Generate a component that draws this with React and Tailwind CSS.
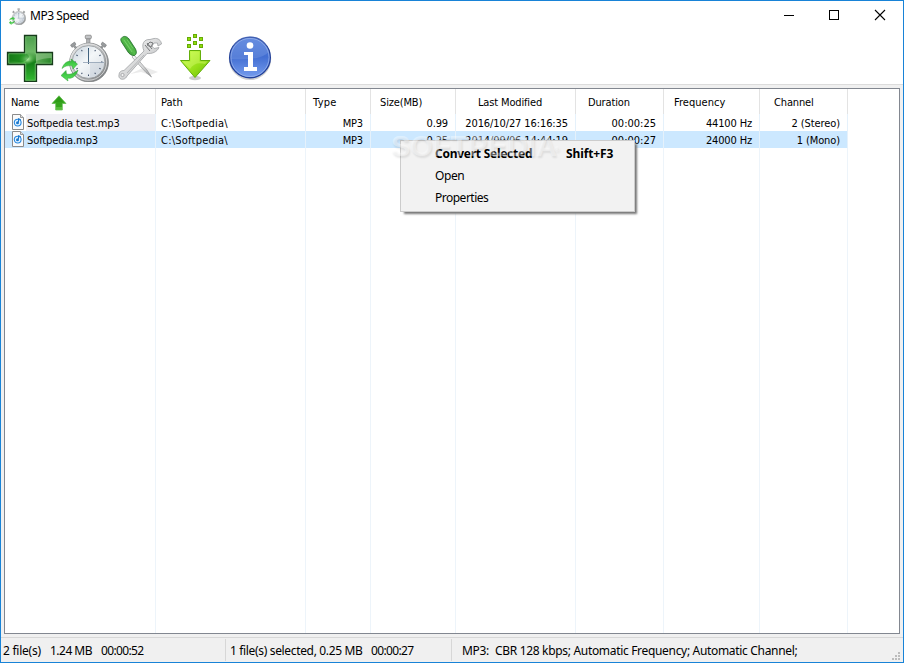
import React from "react";

const COLS = [
  { w: "w-[151px]", label: "Name", pad: "pl-[6px]", head: "tracking-[-0.3px]", body: "tracking-[-0.1px]" },
  { w: "w-[150px]", label: "Path", pad: "pl-[5px]", head: "tracking-[0px]", body: "tracking-[0.22px]" },
  { w: "w-[65px]", label: "Type", pad: "pl-[7px]", head: "tracking-[0.3px]", body: "tracking-[-0.15px]" },
  { w: "w-[85px]", label: "Size(MB)", pad: "pl-[9px]", head: "tracking-[-0.15px]", body: "tracking-[-0.15px]" },
  { w: "w-[120px]", label: "Last Modified", pad: "pl-[22px]", head: "tracking-[-0.15px]", body: "tracking-[-0.1px]" },
  { w: "w-[88px]", label: "Duration", pad: "pl-[12px]", head: "tracking-[-0.15px]", body: "tracking-[0px]" },
  { w: "w-[96px]", label: "Frequency", pad: "pl-[10px]", head: "tracking-[0.05px]", body: "tracking-[-0.15px]" },
  { w: "w-[88px]", label: "Channel", pad: "pl-[14px]", head: "tracking-[-0.15px]", body: "tracking-[-0.1px]" },
];

const ROWS = [
  ["Softpedia test.mp3", "C:\\Softpedia\\", "MP3", "0.99", "2016/10/27 16:16:35", "00:00:25", "44100 Hz", "2 (Stereo)"],
  ["Softpedia.mp3", "C:\\Softpedia\\", "MP3", "0.25", "2014/09/06 14:44:19", "00:00:27", "24000 Hz", "1 (Mono)"],
];

function Stopwatch({ className }) {
  return (
    <svg viewBox="0 0 48 48" className={className}>
      <defs>
        <linearGradient id="rim" x1="0" y1="0" x2="1" y2="1">
          <stop offset="0" stopColor="#eeeeee" /><stop offset=".5" stopColor="#b4b6b8" /><stop offset="1" stopColor="#6d7072" />
        </linearGradient>
        <linearGradient id="face" x1="0" y1="0" x2="1" y2="1">
          <stop offset="0" stopColor="#c6d2dc" /><stop offset=".45" stopColor="#f4f7f9" /><stop offset="1" stopColor="#d3dae1" />
        </linearGradient>
        <linearGradient id="arrowGreen" x1="0" y1="0" x2="0" y2="1">
          <stop offset="0" stopColor="#2fb436" /><stop offset="1" stopColor="#5be75c" />
        </linearGradient>
      </defs>
      <path d="M25.5 4h3.5v6h-3.5z" fill="#b2b4b6" stroke="#86888a" strokeWidth=".6" />
      <rect x="24.3" y="1.2" width="6" height="3.6" rx="1" fill="#c2c4c6" stroke="#777" strokeWidth=".7" />
      <path d="M9.5 11l4-3 1.5 2.2-1.2 1 3 3.4-1.5 1.3-3-3.5-1.3 1zM45.5 11l-4-3-1.5 2.2 1.2 1-3 3.4 1.5 1.3 3-3.5 1.3 1z" fill="#999c9e" stroke="#6a6c6e" strokeWidth=".5" />
      <circle cx="28" cy="28.5" r="19.4" fill="url(#rim)" stroke="#797c7e" strokeWidth=".8" />
      <circle cx="27.5" cy="28" r="18.2" fill="none" stroke="#ededed" strokeWidth="1" opacity=".7" />
      <circle cx="27.5" cy="28" r="16.4" fill="url(#face)" stroke="#94989b" strokeWidth=".8" />
      <path d="M29 28L43 28A16 16 0 0 1 29 43.5z" fill="#b6c1ce" opacity=".3" />
      {Array.from({ length: 12 }, (_, i) => (
        <path key={i} d="M27.5 14v1.5" stroke="#3c4c66" strokeWidth="1" transform={`rotate(${i * 30} 27.5 28)`} />
      ))}
      <path d="M27.5 14v16" stroke="#2f5272" strokeWidth=".9" />
      <path d="M22 28.5h21" stroke="#8fa0b3" strokeWidth=".8" />
      <path d="M1 34.5C3 28.5 7 26.5 10.5 27.5L10 25 16.5 30 12 35 11.5 32C7 31 4 32 1 34.5z" fill="url(#arrowGreen)" stroke="#2f9d35" strokeWidth=".5" />
      <path d="M17 36C15 43 10 45 6.5 44L7 47 0 41.5 5 36.5 5.5 40C10 41 13 39 17 36z" fill="url(#arrowGreen)" stroke="#2f9d35" strokeWidth=".5" />
    </svg>
  );
}

function Plus() {
  return (
    <svg viewBox="0 0 48 48" className="h-12 w-12">
      <defs>
        <linearGradient id="plusArms" x1="0" y1="0" x2="1" y2="0">
          <stop offset="0" stopColor="#1c7d1c" /><stop offset=".4" stopColor="#35a52e" /><stop offset=".5" stopColor="#8bcb82" /><stop offset=".7" stopColor="#55a54f" /><stop offset="1" stopColor="#268326" />
        </linearGradient>
        <linearGradient id="plusStem" x1="0" y1="0" x2="0" y2="1">
          <stop offset="0" stopColor="#4b9e4c" /><stop offset=".35" stopColor="#6db866" /><stop offset=".6" stopColor="#187d18" /><stop offset="1" stopColor="#42d03c" />
        </linearGradient>
        <radialGradient id="plusGlow"><stop offset="0" stopColor="#c3f5b4" /><stop offset="1" stopColor="#65cf59" stopOpacity="0" /></radialGradient>
      </defs>
      <path d="M18.5 1.5h12v17h16v12h-16v17h-12v-17h-17v-12h17z" fill="url(#plusArms)" />
      <path d="M19 2h11v45H19z" fill="url(#plusStem)" />
      <path d="M30 19h16v5Q37 24 30 27z" fill="#8cc286" opacity=".65" />
      <ellipse cx="21" cy="25" rx="8" ry="6" fill="url(#plusGlow)" />
      <path d="M2 19h16Q23 20 23 23 20 29 13 28L2 26z" fill="#08750e" opacity=".4" />
      <path d="M19 35Q21 29 30 27v19H19z" fill="#10891a" opacity=".3" />
      <path d="M19.7 2.7h9.6v17h16v9.6h-16v17h-9.6v-17h-17v-9.6h17z" fill="none" stroke="#82c77b" strokeWidth=".8" />
      <path d="M18.5 1.5h12v17h16v12h-16v17h-12v-17h-17v-12h17z" fill="none" stroke="#173c1b" strokeWidth="1.3" />
    </svg>
  );
}

function Tools() {
  return (
    <svg viewBox="0 0 48 48" className="h-12 w-12">
      <defs>
        <linearGradient id="steel" x1="0" y1="0" x2="1" y2="1">
          <stop offset="0" stopColor="#fafafa" /><stop offset=".55" stopColor="#d5d6d7" /><stop offset="1" stopColor="#929496" />
        </linearGradient>
        <linearGradient id="handle" x1="0" y1="1" x2="1" y2="0">
          <stop offset="0" stopColor="#13641b" /><stop offset=".5" stopColor="#58be4d" /><stop offset="1" stopColor="#1b7a22" />
        </linearGradient>
      </defs>
      <path d="M14 40L29 33 42 38 34 41 25 38z" fill="#dedede" opacity=".6" />
      <path d="M18 21L31 36l4.5 7-5.5-4.5L16 23z" fill="url(#steel)" stroke="#898b8d" strokeWidth=".6" />
      <path d="M28 17C25 10 28 5 34 5.5L38 4.5C42 4 45 6 45.5 10L42 12 41.5 9 38 9 36 12 38 14.5 43 13.5C41 18 36 20 31 19.5L11 42C9 47 2 46 3 41 3 38 5 36.5 8 36.5z" fill="url(#steel)" stroke="#a0a2a4" strokeWidth=".8" />
      <path d="M29 11l5 6M31 9l5 6M34 8l3 1-2 4-4-2z" stroke="#77797b" fill="none" strokeWidth="1" />
      <path d="M28 21L11 39" stroke="#b0b2b4" strokeWidth=".9" />
      <circle cx="6.5" cy="41" r="1.6" fill="#f5f5f5" stroke="#929496" strokeWidth=".7" />
      <path d="M5.5 4C7.5 1.5 11 2 13 5L19.5 15C21 18 20.5 20.5 18.5 21.5 15.5 22 13 19.5 12 18L5.5 8C4.5 6 4.5 5 5.5 4z" fill="url(#handle)" stroke="#206d28" strokeWidth=".8" />
      <path d="M8 6l8 12M11 5.5l6 9" stroke="#8bdd7c" strokeWidth=".9" opacity=".7" />
    </svg>
  );
}

function Download() {
  return (
    <svg viewBox="0 0 48 48" className="h-12 w-12">
      <defs><linearGradient id="downGreen" x1="0" y1="0" x2="1" y2="1"><stop stopColor="#caff4c" /><stop offset=".6" stopColor="#94dd16" /><stop offset="1" stopColor="#60b60a" /></linearGradient></defs>
      <ellipse cx="24" cy="44" rx="6" ry="2.2" fill="#aaa" opacity=".6" />
      {[[22, 0], [16, 3], [28, 3], [22, 7], [16, 10], [28, 10]].map(([x, y]) => (
        <rect key={`${x}-${y}`} x={x + .5} y={y + .5} width="3" height="3" fill="#8fdd0c" stroke="#66aa06" />
      ))}
      <path d="M18.5 16.5h11v10h9.5L24 43.5 9.5 26.5h9z" fill="url(#downGreen)" stroke="#64af0a" />
      <path d="M19.5 17.5h9v10h8L34 30Q24 27 19 35L11.7 27.5h7.8z" fill="#e0ff79" opacity=".38" />
    </svg>
  );
}

function Info() {
  return (
    <svg viewBox="0 0 48 48" className="h-12 w-12">
      <defs><linearGradient id="infoBlue" x1="0" y1="0" x2="0" y2="1"><stop stopColor="#5781dc" /><stop offset=".48" stopColor="#426ed2" /><stop offset="1" stopColor="#769dee" /></linearGradient></defs>
      <circle cx="24" cy="24.8" r="21.2" fill="#aaa" opacity=".55" />
      <circle cx="24" cy="23.5" r="20.3" fill="url(#infoBlue)" stroke="#22419b" strokeWidth="1.4" />
      <circle cx="24" cy="23.5" r="19.1" fill="none" stroke="#9ab5ee" strokeWidth=".8" />
      <path d="M5 25A19 19 0 0 1 43 18Q34 27 5 25z" fill="#8ca9e8" opacity=".3" />
      <circle cx="24" cy="11.5" r="3.3" fill="white" />
      <path d="M18 18h9v15h4v4H18v-4h4V21h-4z" fill="white" />
    </svg>
  );
}

function FileIcon() {
  return (
    <svg viewBox="0 0 12 16" className="mb-px h-4 w-3 shrink-0">
      <path d="M.5.5h8l3 3v12H.5z" fill="#fafafa" stroke="#8b8b8b" />
      <path d="M8.5.5v3h3" fill="#ddd" stroke="#999" />
      <circle cx="5.7" cy="8.6" r="3.4" fill="#e3f3ff" stroke="#2788df" strokeWidth="1.1" />
      <circle cx="5.5" cy="8.8" r="1.5" fill="#1976cc" />
      <path d="M6.5 8V4.5l2.5 1.5" stroke="#1976cc" fill="none" />
    </svg>
  );
}

function TitleBar() {
  return (
    <header className="flex h-[30px] shrink-0 items-center bg-white pl-2">
      <Stopwatch className="h-[17px] w-[17px]" />
      <h1 className="ml-[4px] font-['Noto_Sans'] text-[12px] tracking-[-0.45px]">MP3 Speed</h1>
      <svg viewBox="0 0 110 14" className="mr-[13px] ml-auto h-[14px] w-[110px]" fill="none" stroke="black">
        <path d="M4 6.5h10M49.5 1.5h9v9h-9z" shapeRendering="crispEdges" />
        <path d="M95 1l10 10M105 1L95 11" strokeWidth="1.1" />
      </svg>
    </header>
  );
}

function ListView() {
  return (
    <main className="relative mx-[3px] mt-[3px] flex h-[546px] shrink-0 border border-[#828790] bg-white font-['DejaVu_Sans_Condensed'] text-[11px]">
      {COLS.map((col, c) => (
        <div key={col.label} className={`${col.w} flex shrink-0 flex-col`}>
          <div className={`flex h-[25px] items-center border-r border-[#e3e3e3] pt-[3px] ${col.pad}`}>
            <span className={`leading-[14px] whitespace-nowrap ${col.head}`}>{col.label}</span>
            {c === 0 && (
              <svg viewBox="0 0 16 16" className="mb-px ml-[12px] h-4 w-4">
                <path d="M8 .8L15 8.5H11.3V15H4.7V8.5H1z" fill="#35a51c" stroke="#5db94b" strokeWidth=".7" />
                <path d="M8 2L12 7H4z" fill="#258b12" opacity=".4" /><path d="M5 12h6v3H5z" fill="#77d558" opacity=".5" />
              </svg>
            )}
          </div>
          {ROWS.map((row, r) => (
            <div key={row[0]} className={`flex h-[17px] items-center whitespace-nowrap border-r border-[#e5f1fb] ${r === 1 ? "bg-[#cce8ff]" : ""} ${c === 0 ? "pl-[7px]" : c === 1 ? "pl-[5px]" : "justify-end pr-[7px]"}`}>
              {c === 0 && <FileIcon />}
              <span className={`pt-[3px] leading-[14px] ${col.body} ${c === 0 ? "ml-[2px] flex-1 pl-px" : ""} ${c === 0 && r === 0 ? "bg-[#f0f0f5]" : ""}`}>{row[c]}</span>
            </div>
          ))}
          <div className="flex-1 border-r border-[#edf4fa]" />
        </div>
      ))}
      <div className="absolute top-[51px] left-[395px] h-[72px] w-[235px] border border-[#ccc] bg-[#f2f2f2] pt-[2px] font-['Noto_Sans'] text-[12px] shadow-[3px_3px_2px_-1px_#777]">
        <div className="flex h-[22px] items-center pl-[34px] font-bold whitespace-nowrap">
          <span className="w-[131px] tracking-[-0.26px]">Convert Selected</span><span className="tracking-[-0.1px]">Shift+F3</span>
        </div>
        <div className="flex h-[22px] items-center pl-[34px] tracking-[-0.4px]">Open</div>
        <div className="flex h-[22px] items-center pl-[34px] tracking-[-0.5px]">Properties</div>
      </div>
      <div className="pointer-events-none absolute top-[41px] left-[386px] font-['Liberation_Sans'] text-[29px] leading-[32px] font-bold text-white/40 [text-shadow:1px_2px_2px_#00000016]">SOFTPEDIA<sup className="-ml-[3px] text-[8px]">®</sup></div>
    </main>
  );
}

export default function App() {
  return (
    <div className="flex h-[663px] w-[904px] flex-col overflow-hidden border border-[#1883d7] bg-[#f0f0f0] text-black">
      <TitleBar />
      <nav className="flex h-[53px] shrink-0 items-start gap-[7px] bg-white pt-[3px] pl-[5px]">
        <Plus /><Stopwatch className="h-12 w-12" /><Tools /><Download /><Info />
      </nav>
      <div className="h-px shrink-0 bg-[#dcdcdc]" />
      <ListView />
      <footer className="mt-[3px] flex flex-1 items-center border-t border-[#d7d7d7] font-['Noto_Sans'] text-[12px] whitespace-pre">
        <div className="flex h-[22px] w-[225px] items-center border-r border-[#d7d7d7] pt-[2px] pl-[2px]">
          <span className="w-[47px] tracking-[-0.25px]">2 file(s)</span><span className="w-[51px] tracking-[-0.52px]">1.24 MB</span><span className="tracking-[-0.65px]">00:00:52</span>
        </div>
        <div className="flex h-[22px] w-[226px] items-center border-r border-[#d7d7d7] pt-[2px] pl-[4px]">
          <span className="w-[141px] tracking-[-0.34px]">1 file(s) selected, 0.25 MB</span><span className="tracking-[-0.65px]">00:00:27</span>
        </div>
        <div className="flex pt-[2px] pl-[10px]"><span className="w-[33px] tracking-[-0.3px]">MP3:</span><span className="tracking-[-0.32px]">CBR 128 kbps; Automatic Frequency; Automatic Channel;</span></div>
        <svg viewBox="0 0 9 9" className="mr-[2px] mb-[1px] ml-auto h-[9px] w-[9px] self-end" fill="#bcbcbc">
          <path d="M6 0h2v2H6zM3 3h2v2H3zM6 3h2v2H6zM0 6h2v2H0zM3 6h2v2H3zM6 6h2v2H6z" />
        </svg>
      </footer>
    </div>
  );
}
